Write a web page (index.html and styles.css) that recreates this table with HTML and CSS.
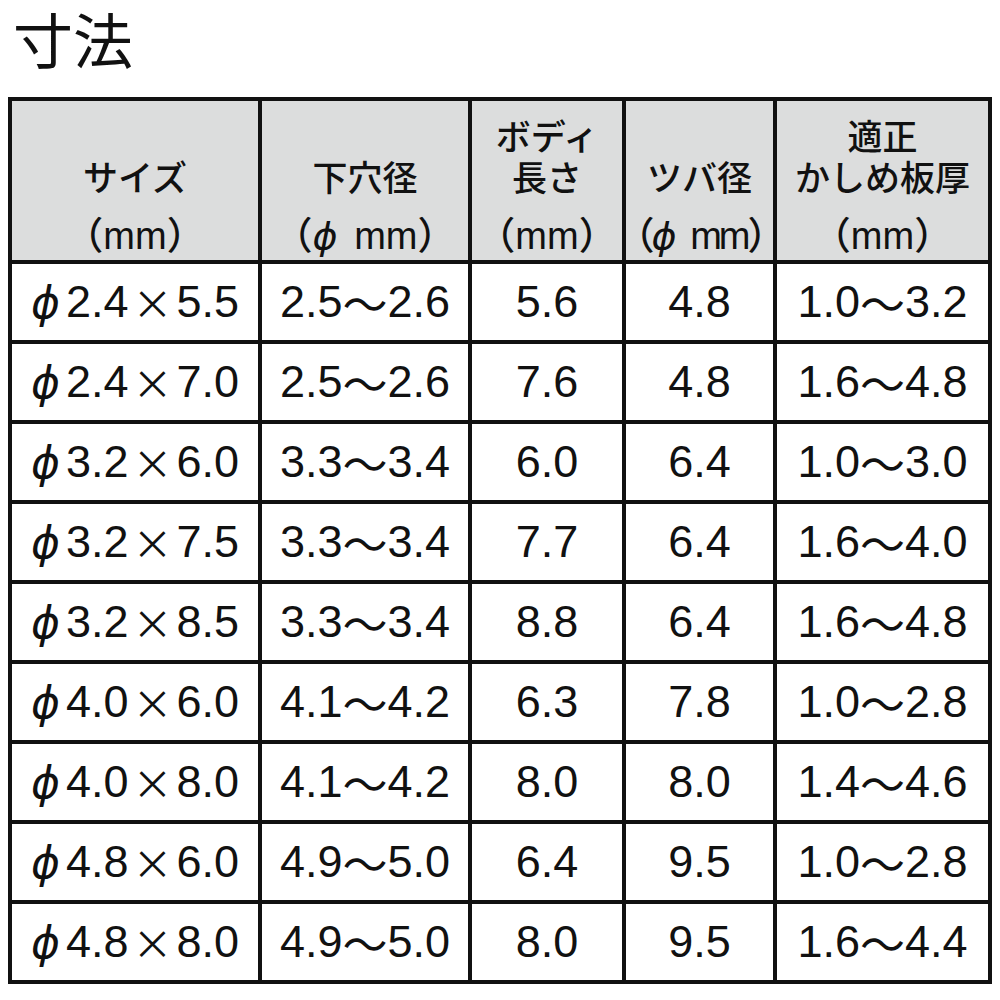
FILE: index.html
```html
<!DOCTYPE html>
<html lang="ja">
<head>
<meta charset="utf-8">
<link rel="stylesheet" href="styles.css">
</head>
<body>
<div class="title">寸法</div>
<div class="table">
  <div class="hcell"><div class="name">サイズ</div><div class="unit">（mm）</div></div>
  <div class="hcell"><div class="name">下穴径</div><div class="unit">（<span class="phi">ϕ</span> mm）</div></div>
  <div class="hcell"><div class="name">ボディ<br>長さ</div><div class="unit">（mm）</div></div>
  <div class="hcell"><div class="name">ツバ径</div><div class="unit tight">（<span class="phi">ϕ</span> mm）</div></div>
  <div class="hcell"><div class="name">適正<br>かしめ板厚</div><div class="unit">（mm）</div></div>

  <div class="cell"><span class="phi">ϕ</span>2.4<span class="x">×</span>5.5</div><div class="cell">2.5<span class="w">〜</span>2.6</div><div class="cell">5.6</div><div class="cell">4.8</div><div class="cell">1.0<span class="w">〜</span>3.2</div>
  <div class="cell"><span class="phi">ϕ</span>2.4<span class="x">×</span>7.0</div><div class="cell">2.5<span class="w">〜</span>2.6</div><div class="cell">7.6</div><div class="cell">4.8</div><div class="cell">1.6<span class="w">〜</span>4.8</div>
  <div class="cell"><span class="phi">ϕ</span>3.2<span class="x">×</span>6.0</div><div class="cell">3.3<span class="w">〜</span>3.4</div><div class="cell">6.0</div><div class="cell">6.4</div><div class="cell">1.0<span class="w">〜</span>3.0</div>
  <div class="cell"><span class="phi">ϕ</span>3.2<span class="x">×</span>7.5</div><div class="cell">3.3<span class="w">〜</span>3.4</div><div class="cell">7.7</div><div class="cell">6.4</div><div class="cell">1.6<span class="w">〜</span>4.0</div>
  <div class="cell"><span class="phi">ϕ</span>3.2<span class="x">×</span>8.5</div><div class="cell">3.3<span class="w">〜</span>3.4</div><div class="cell">8.8</div><div class="cell">6.4</div><div class="cell">1.6<span class="w">〜</span>4.8</div>
  <div class="cell"><span class="phi">ϕ</span>4.0<span class="x">×</span>6.0</div><div class="cell">4.1<span class="w">〜</span>4.2</div><div class="cell">6.3</div><div class="cell">7.8</div><div class="cell">1.0<span class="w">〜</span>2.8</div>
  <div class="cell"><span class="phi">ϕ</span>4.0<span class="x">×</span>8.0</div><div class="cell">4.1<span class="w">〜</span>4.2</div><div class="cell">8.0</div><div class="cell">8.0</div><div class="cell">1.4<span class="w">〜</span>4.6</div>
  <div class="cell"><span class="phi">ϕ</span>4.8<span class="x">×</span>6.0</div><div class="cell">4.9<span class="w">〜</span>5.0</div><div class="cell">6.4</div><div class="cell">9.5</div><div class="cell">1.0<span class="w">〜</span>2.8</div>
  <div class="cell"><span class="phi">ϕ</span>4.8<span class="x">×</span>8.0</div><div class="cell">4.9<span class="w">〜</span>5.0</div><div class="cell">8.0</div><div class="cell">9.5</div><div class="cell">1.6<span class="w">〜</span>4.4</div>
</div>
</body>
</html>
```
FILE: styles.css
```css
html, body {
  margin: 0;
  padding: 0;
  background: #fff;
}
body {
  margin: 8px;
  color: #111;
  font-family: "Liberation Sans", "Noto Sans CJK JP", sans-serif;
}
.title {
  font-family: "Noto Sans CJK JP", sans-serif;
  font-size: 60px;
  line-height: 64px;
  padding-left: 5px;
  margin-top: -2px;
}
.table {
  margin-top: 27px;
  width: 984px;
  box-sizing: border-box;
  display: grid;
  grid-template-columns: 246px 206px 150px 147px 211px;
  grid-template-rows: 159px repeat(9, 76px);
  gap: 4px;
  padding: 4px;
  background: #111;
}
.hcell {
  background: #dcdddd;
  display: flex;
  flex-direction: column;
  justify-content: flex-end;
  align-items: center;
  padding-bottom: 4px;
  font-family: "Noto Sans CJK JP", sans-serif;
  font-size: 35px;
  font-weight: 500;
  text-align: center;
}
.name {
  line-height: 41px;
}
.unit {
  margin-top: 20px;
  line-height: 40px;
  font-family: "Liberation Sans", "Noto Sans CJK JP", sans-serif;
  font-size: 38px;
  white-space: nowrap;
}
.unit.tight {
  letter-spacing: -3px;
}
.cell {
  background: #fff;
  display: flex;
  align-items: center;
  justify-content: center;
  font-size: 45px;
  white-space: nowrap;
}
.phi {
  font-family: "DejaVu Sans", sans-serif;
  font-style: italic;
  font-weight: 400;
  margin-right: 6px;
}
.unit .phi {
  letter-spacing: 0;
}
.cell .phi {
  font-size: 44px;
}
.x {
  font-family: "Noto Sans CJK JP", sans-serif;
  font-size: 40px;
  margin: 0 4px;
}
.w {
  font-family: "Noto Sans CJK JP", sans-serif;
}
```
